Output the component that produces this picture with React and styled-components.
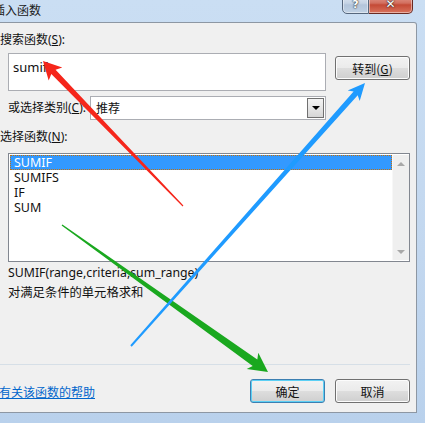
import React from "react";
import styled, { createGlobalStyle } from "styled-components";

const Global = createGlobalStyle`
  html, body { margin: 0; padding: 0; overflow: hidden; background: #c4d9f0; }
  #root { width: 425px; height: 423px; }
  * { box-sizing: border-box; }
`;

const FONT = `"Noto Sans", "Noto Sans CJK SC", sans-serif`;

const Window = styled.div`
  position: relative;
  width: 425px;
  height: 423px;
  overflow: hidden;
  display: flex;
  flex-direction: column;
  background: linear-gradient(180deg, #cadef3 0%, #c2d7ef 60%, #b9d1ec 100%);
  font-family: ${FONT};
  font-size: 12px;
  color: #111;
`;

const TitleBar = styled.div`
  height: 22px;
  flex: none;
  display: flex;
  align-items: flex-start;
  justify-content: space-between;
  padding-right: 12px;
`;

const Title = styled.div`
  margin-left: -7px;
  line-height: 19px;
  font-size: 12px;
  font-family: "Noto Sans CJK SC", sans-serif;
  color: #1a1a1a;
`;

const Caption = styled.div`
  display: flex;
  margin-top: -6px;
`;

const CapBtn = styled.div`
  height: 20px;
  display: flex;
  align-items: flex-end;
  justify-content: center;
  padding-bottom: 3px;
  color: #fff;
  font-family: "DejaVu Sans", sans-serif;
  font-weight: bold;
  line-height: 1;
  border: 1px solid ${(p) => (p.$close ? "#6a2a22" : "#56677d")};
  border-radius: ${(p) => (p.$close ? "0 0 5px 0" : "0 0 0 5px")};
  width: ${(p) => (p.$close ? "44px" : "27px")};
  background: ${(p) =>
    p.$close
      ? "linear-gradient(180deg, #e6a195 0%, #d26f5f 45%, #c44a36 55%, #d9735d 100%)"
      : "linear-gradient(180deg, #dfe8f3 0%, #c6d4e5 45%, #b3c5db 55%, #c0d1e4 100%)"};
  box-shadow: inset 0 0 0 1px rgba(255, 255, 255, 0.45);
  text-shadow: 0 0 2px #222, 0 0 1px #222;
  font-size: ${(p) => (p.$close ? "12px" : "11px")};
  & + & { border-left: none; }
`;

const Frame = styled.div`
  flex: 1;
  display: flex;
  padding: 0 8px 10px 0;
`;

const Client = styled.div`
  flex: 1;
  display: flex;
  flex-direction: column;
  background: #f0f0f0;
  border: 1px solid #8d97a3;
  border-left: none;
  border-top-right-radius: 3px;
  padding: 0 6px 0 8px;
`;

const Label = styled.div`
  line-height: 16px;
  margin-top: ${(p) => p.$mt || 0}px;
  margin-left: ${(p) => (p.$flush ? -8 : 0)}px;
  white-space: nowrap;
  color: #111;
`;

const U = styled.span`
  text-decoration: underline;
`;

const Row = styled.div`
  display: flex;
  align-items: ${(p) => p.$align || "center"};
  margin-top: ${(p) => p.$mt || 0}px;
  gap: ${(p) => p.$gap || 0}px;
`;

const SearchBox = styled.div`
  width: 318px;
  height: 38px;
  background: #fff;
  border: 1px solid #abadb3;
  padding: 4px 4px;
  line-height: 18px;
  font-size: 13px;
`;

const Button = styled.div`
  width: 75px;
  height: 24px;
  margin-top: ${(p) => p.$mt || 0}px;
  display: flex;
  align-items: center;
  justify-content: center;
  border: 1px solid ${(p) => (p.$default ? "#3c7fb1" : "#707070")};
  border-radius: 3px;
  background: linear-gradient(180deg, #f2f2f2 0%, #ebebeb 48%, #dddddd 52%, #cfcfcf 100%);
  box-shadow: inset 0 0 0 1px ${(p) => (p.$default ? "#5cd0f5" : "#fcfcfc")};
  color: #111;
  font-family: "Noto Sans CJK SC", sans-serif;
  font-size: 12px;
`;

const ComboLabel = styled.div`
  width: 82px;
  line-height: 16px;
  white-space: nowrap;
`;

const Combo = styled.div`
  width: 236px;
  height: 24px;
  background: #fff;
  border: 1px solid #abadb3;
  display: flex;
  align-items: stretch;
  padding: 1px;
`;

const ComboText = styled.div`
  flex: 1;
  padding-left: 4px;
  line-height: 20px;
  font-family: "Noto Sans CJK SC", sans-serif;
`;

const DropBtn = styled.div`
  width: 17px;
  border: 1px solid #707070;
  background: linear-gradient(180deg, #f4f4f4 0%, #e6e6e6 50%, #d6d6d6 100%);
  display: flex;
  align-items: center;
  justify-content: center;
`;

const Tri = styled.div`
  width: 0;
  height: 0;
  border-left: ${(p) => p.$s}px solid transparent;
  border-right: ${(p) => p.$s}px solid transparent;
  ${(p) =>
    p.$up
      ? `border-bottom: ${Math.ceil(p.$s * 0.8)}px solid ${p.$c};`
      : `border-top: ${Math.ceil(p.$s * 0.8)}px solid ${p.$c};`}
`;

const ListBox = styled.div`
  margin-top: 8px;
  width: 402px;
  height: 109px;
  background: #fff;
  border: 1px solid #828790;
  display: flex;
  padding: 1px 0 1px 1px;
`;

const Items = styled.div`
  flex: 1;
  display: flex;
  flex-direction: column;
`;

const Item = styled.div`
  height: 15px;
  line-height: 13px;
  padding-left: 3px;
  font-size: 12.5px;
  color: ${(p) => (p.$sel ? "#fff" : "#111")};
  background: ${(p) => (p.$sel ? "#3399ff" : "transparent")};
  border: 1px dotted ${(p) => (p.$sel ? "#c4700a" : "transparent")};
`;

const Scroll = styled.div`
  width: 17px;
  background: #efefef;
  border-left: 1px solid #f7f7f7;
  display: flex;
  flex-direction: column;
  justify-content: space-between;
  align-items: center;
  padding: 7px 0 6px;
`;

const Desc = styled.div`
  margin-top: ${(p) => p.$mt || 0}px;
  line-height: 20px;
  font-size: 12.3px;
  white-space: nowrap;
`;

const Footer = styled.div`
  margin-top: auto;
  margin-left: -8px;
  border-top: 1px solid #d6dfe7;
  display: flex;
  align-items: center;
  justify-content: space-between;
  padding: 14px 0 9px;
`;

const Link = styled.a`
  color: #0066cc;
  text-decoration: underline;
  font-family: "Noto Sans CJK SC", sans-serif;
  font-size: 12px;
  margin-left: -1px;
`;

const Buttons = styled.div`
  display: flex;
  gap: 10px;
`;

const Overlay = styled.svg`
  position: absolute;
  left: 0;
  top: 0;
  pointer-events: none;
`;

function arrow(tail, tip, wTail, wNeck, headLen, headHalf) {
  const dx = tip[0] - tail[0];
  const dy = tip[1] - tail[1];
  const len = Math.hypot(dx, dy);
  const ux = dx / len, uy = dy / len;
  const nx = -uy, ny = ux;
  const neck = [tip[0] - ux * headLen, tip[1] - uy * headLen];
  const back = [neck[0] + ux * 3, neck[1] + uy * 3];
  const pts = [
    [tail[0] + (nx * wTail) / 2, tail[1] + (ny * wTail) / 2],
    [back[0] + (nx * wNeck) / 2, back[1] + (ny * wNeck) / 2],
    [neck[0] + nx * headHalf, neck[1] + ny * headHalf],
    tip,
    [neck[0] - nx * headHalf, neck[1] - ny * headHalf],
    [back[0] - (nx * wNeck) / 2, back[1] - (ny * wNeck) / 2],
    [tail[0] - (nx * wTail) / 2, tail[1] - (ny * wTail) / 2],
  ];
  return pts.map((p) => p.map((v) => v.toFixed(1)).join(",")).join(" ");
}

export default function App() {
  return (
    <>
      <Global />
      <Window>
        <TitleBar>
          <Title>插入函数</Title>
          <Caption>
            <CapBtn>?</CapBtn>
            <CapBtn $close>✕</CapBtn>
          </Caption>
        </TitleBar>
        <Frame>
          <Client>
            <Label $mt={9} $flush>
              搜索函数(<U>S</U>):
            </Label>
            <Row $mt={5} $align="flex-start" $gap={9}>
              <SearchBox>sumif</SearchBox>
              <Button $mt={3}>
                转到(<U>G</U>)
              </Button>
            </Row>
            <Row $mt={5}>
              <ComboLabel>
                或选择类别(<U>C</U>):
              </ComboLabel>
              <Combo>
                <ComboText>推荐</ComboText>
                <DropBtn>
                  <Tri $s={4} $c="#000" />
                </DropBtn>
              </Combo>
            </Row>
            <Label $mt={9} $flush>
              选择函数(<U>N</U>):
            </Label>
            <ListBox>
              <Items>
                <Item $sel>SUMIF</Item>
                <Item>SUMIFS</Item>
                <Item>IF</Item>
                <Item>SUM</Item>
              </Items>
              <Scroll>
                <Tri $s={4} $up $c="#a8a8a8" />
                <Tri $s={4} $c="#a8a8a8" />
              </Scroll>
            </ListBox>
            <Desc $mt={1}>SUMIF(range,criteria,sum_range)</Desc>
            <Desc>对满足条件的单元格求和</Desc>
            <Footer>
              <Link href="#">有关该函数的帮助</Link>
              <Buttons>
                <Button $default>确定</Button>
                <Button>取消</Button>
              </Buttons>
            </Footer>
          </Client>
        </Frame>
        <Overlay width="425" height="423" viewBox="0 0 425 423">
          <polygon points={arrow([183, 206], [43, 61], 1.2, 6, 18, 9.5)} fill="#f5261b" />
          <polygon points={arrow([62, 225], [268, 372], 1.5, 8, 19, 10)} fill="#1aa81f" />
          <polygon points={arrow([131, 346], [365, 83], 2, 5.5, 17, 8)} fill="#1f9bff" />
        </Overlay>
      </Window>
    </>
  );
}
